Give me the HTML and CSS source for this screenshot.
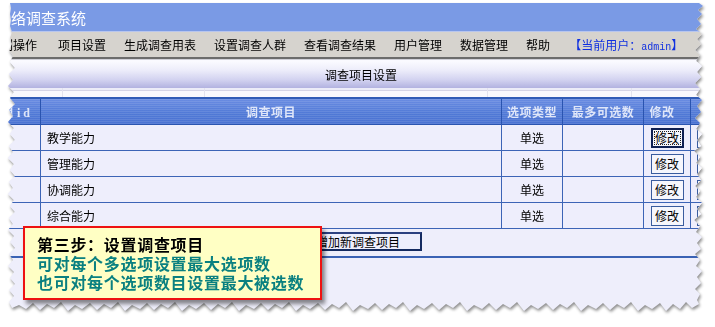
FILE: index.html
```html
<!DOCTYPE html>
<html lang="zh-CN">
<head>
<meta charset="utf-8">
<title>网络调查系统</title>
<link rel="stylesheet" href="styles.css">
</head>
<body>
<div class="stage">
  <div class="sheet-wrap">
    <div class="sheet">
      <div class="titlebar"><span class="title">网络调查系统</span></div>
      <nav class="menu">
        <span class="first">列操作</span>
        <span>项目设置</span>
        <span>生成调查用表</span>
        <span>设置调查人群</span>
        <span>查看调查结果</span>
        <span>用户管理</span>
        <span>数据管理</span>
        <span>帮助</span>
        <span class="user">【当前用户：<span class="mono">admin</span>】</span>
      </nav>
      <div class="menu-rule"></div>
      <div class="bar">调查项目设置</div>
      <div class="ghost-row"><span></span><span></span><span></span><span></span><span></span></div>
      <div class="grid">
        <div class="row head">
          <div class="c c-id">题目id</div>
          <div class="c">调查项目</div>
          <div class="c">选项类型</div>
          <div class="c">最多可选数</div>
          <div class="c c-edit">修改</div>
          <div class="c"></div>
        </div>
        <div class="row">
          <div class="c"></div>
          <div class="c c-name">教学能力</div>
          <div class="c">单选</div>
          <div class="c"></div>
          <div class="c"><button class="btn btn-focus">修改</button></div>
          <div class="c c-del"><button class="btn">删除</button></div>
        </div>
        <div class="row">
          <div class="c"></div>
          <div class="c c-name">管理能力</div>
          <div class="c">单选</div>
          <div class="c"></div>
          <div class="c"><button class="btn">修改</button></div>
          <div class="c c-del"><button class="btn">删除</button></div>
        </div>
        <div class="row">
          <div class="c"></div>
          <div class="c c-name">协调能力</div>
          <div class="c">单选</div>
          <div class="c"></div>
          <div class="c"><button class="btn">修改</button></div>
          <div class="c c-del"><button class="btn">删除</button></div>
        </div>
        <div class="row">
          <div class="c"></div>
          <div class="c c-name">综合能力</div>
          <div class="c">单选</div>
          <div class="c"></div>
          <div class="c"><button class="btn">修改</button></div>
          <div class="c c-del"><button class="btn">删除</button></div>
        </div>
      </div>
      <div class="addrow"><button class="btn btn-add">增加新调查项目</button></div>
      <div class="rest"></div>
    </div>
  </div>
  <div class="tip">
    <div class="tip-head">第三步：设置调查项目</div>
    <div class="tip-line">可对每个多选项设置最大选项数</div>
    <div class="tip-line">也可对每个选项数目设置最大被选数</div>
  </div>
</div>
</body>
</html>
```

FILE: styles.css
```css
* { box-sizing: border-box; }
html, body { margin: 0; padding: 0; background: #ffffff; }
body {
  font-family: "Noto Sans CJK SC", "Liberation Sans", sans-serif;
  font-size: 12px;
  color: #000;
}
.stage { position: relative; width: 715px; height: 327px; overflow: hidden; }
.sheet-wrap { filter: drop-shadow(1px 2px 1.5px rgba(0,0,0,0.45)); }
.sheet {
  width: 715px;
  height: 327px;
  overflow: hidden;
  background: #eeeefb;
  display: flex;
  flex-direction: column;
  clip-path: polygon(10px 3px, 699px 3px, 703px 6px, 698px 10px, 702px 14px, 697px 19px, 701px 24px, 696px 29px, 702px 34px, 697px 39px, 701px 44px, 695px 50px, 700px 55px, 696px 61px, 702px 66px, 697px 72px, 701px 77px, 695px 83px, 700px 89px, 696px 95px, 702px 100px, 697px 106px, 701px 112px, 695px 118px, 700px 123px, 696px 129px, 702px 134px, 697px 140px, 701px 146px, 694px 151px, 700px 157px, 696px 163px, 702px 168px, 697px 174px, 701px 180px, 695px 186px, 700px 191px, 696px 197px, 702px 203px, 697px 209px, 701px 214px, 694px 220px, 700px 226px, 696px 232px, 702px 237px, 697px 243px, 701px 249px, 695px 254px, 700px 260px, 696px 266px, 702px 271px, 697px 277px, 701px 283px, 695px 289px, 700px 294px, 697px 300px, 699px 304px,
    692px 308px, 686px 302px, 680px 309px, 673px 304px, 666px 311px, 660px 303px, 652px 309px, 645px 305px, 638px 311px, 631px 302px, 624px 308px, 617px 304px, 610px 310px, 603px 303px, 596px 309px, 588px 305px, 581px 311px, 574px 302px, 567px 308px, 560px 304px, 553px 310px, 546px 303px, 538px 309px, 531px 305px, 524px 311px, 517px 302px, 510px 308px, 503px 304px, 496px 310px, 489px 303px, 482px 309px, 474px 305px, 467px 311px, 460px 302px, 453px 308px, 446px 304px, 439px 310px, 432px 303px, 424px 309px, 417px 305px, 410px 311px, 403px 302px, 396px 308px, 389px 304px, 382px 310px, 375px 303px, 368px 309px, 360px 305px, 353px 311px, 346px 302px, 339px 308px, 332px 304px, 325px 310px, 318px 303px, 310px 309px, 303px 305px, 296px 311px, 289px 302px, 282px 308px, 275px 304px, 268px 310px, 261px 303px, 254px 309px, 246px 305px, 239px 311px, 232px 302px, 225px 308px, 218px 304px, 211px 310px, 204px 303px, 196px 309px, 189px 305px, 182px 311px, 175px 302px, 168px 308px, 161px 304px, 154px 310px, 147px 303px, 140px 309px, 132px 305px, 125px 311px, 118px 302px, 111px 308px, 104px 304px, 97px 310px, 90px 303px, 82px 309px, 75px 305px, 68px 311px, 61px 302px, 54px 308px, 47px 304px, 40px 310px, 33px 303px, 26px 309px, 19px 305px, 12px 308px,
    9px 302px, 14px 296px, 9px 290px, 15px 284px, 10px 278px, 14px 272px, 8px 266px, 13px 260px, 9px 254px, 15px 248px, 10px 242px, 14px 236px, 8px 230px, 13px 224px, 9px 218px, 15px 212px, 10px 206px, 14px 200px, 8px 194px, 13px 188px, 9px 182px, 15px 176px, 10px 170px, 14px 164px, 8px 158px, 13px 152px, 9px 146px, 15px 140px, 10px 134px, 14px 128px, 8px 122px, 13px 116px, 9px 110px, 15px 104px, 10px 98px, 14px 92px, 8px 86px, 13px 80px, 9px 74px, 15px 68px, 10px 62px, 13px 56px, 9px 50px, 12px 44px, 10px 38px, 12px 32px, 10px 26px, 11px 20px, 10px 14px, 11px 8px);
}

/* title bar */
.titlebar {
  margin-top: 3px;
  height: 29px;
  flex: none;
  background: #7a9ae5;
  border-bottom: 1px solid #b8c6ee;
  display: flex;
  align-items: center;
  color: #ffffff;
  font-size: 15px;
  white-space: nowrap;
}
.title { margin-left: -4px; }

/* menu */
.menu {
  flex: none;
  height: 25px;
  background: #d6d3ce;
  display: flex;
  align-items: center;
  gap: 18px;
  padding-left: 1px;
  white-space: nowrap;
  font-size: 12px;
}
.menu .first { margin-right: 3px; }
.menu .user { color: #1030e0; margin-left: 1px; }
.menu .mono { font-family: "Liberation Mono", "DejaVu Sans Mono", monospace; font-size: 10px; }
.menu-rule {
  flex: none;
  height: 4px;
  background: linear-gradient(#6c6c6c 0 2px, #d0d0d8 2px 3px, #fafaff 3px);
}

/* section bar */
.bar {
  flex: none;
  height: 27px;
  background: linear-gradient(#fbfbff 0%, #ececfa 35%, #d2d2f0 70%, #b2b2e0 100%);
  display: flex;
  align-items: center;
  justify-content: center;
  padding-left: 7px;
  font-size: 12px;
}
.ghost-row {
  flex: none;
  height: 9px;
  display: grid;
  grid-template-columns: 63px 142px 283px 144px 1fr;
  background: linear-gradient(#ececf8 0 2px, #d4d4e6 2px 3px, #f8f8fd 3px);
}
.ghost-row span { border-right: 1px solid #e2e2ee; }

/* table */
.grid {
  flex: none;
  border-top: 2px solid #2f5bb6;
  width: 780px;
}
.row {
  display: grid;
  grid-template-columns: 41px 461px 61px 81px 47px 89px;
  height: 26px;
  border-bottom: 1px solid #3c64b6;
  background: #eeeefc;
}
.c {
  border-right: 1px solid #3c64b6;
  display: flex;
  align-items: center;
  justify-content: center;
  white-space: nowrap;
  overflow: hidden;
}
.c-name { justify-content: flex-start; padding-left: 6px; }
.c-del { justify-content: flex-start; padding-left: 6px; }
.head {
  background:
    repeating-linear-gradient(rgba(255,255,255,0.10) 0 1px, rgba(255,255,255,0) 1px 2px),
    linear-gradient(#6a8ce2, #5079d6 60%, #4a72d2);
  border-bottom-color: #2a54b0;
}
.head .c {
  border-right-color: #2a54b0;
  color: #dfe6f9;
  font-weight: bold;
  font-size: 12px;
  letter-spacing: 0.5px;
}
.head .c-id {
  justify-content: flex-end;
  padding-right: 7px;
  letter-spacing: 3px;
  font-family: "Liberation Serif", "Noto Sans CJK SC", serif;
}
.head .c-edit { padding-right: 10px; }

/* buttons */
.btn {
  font-family: "Noto Sans CJK SC", "Liberation Sans", sans-serif;
  font-size: 12px;
  color: #000;
  width: 33px;
  height: 20px;
  padding: 0;
  margin: 0;
  border: 1px solid #3a5c9e;
  background: #f6f6fc;
  display: flex;
  align-items: center;
  justify-content: center;
}
.btn-focus {
  border: 2px solid #0e1f52;
  outline: 1px dotted #222;
  outline-offset: -4px;
}
.addrow {
  flex: none;
  height: 29px;
  border-bottom: 2px solid #3a62b4;
  display: flex;
  align-items: center;
  padding-left: 294px;
  padding-bottom: 2px;
}
.btn-add {
  width: 128px;
  height: 19px;
  border: 2px solid #142a60;
  border-top-color: #2c4080;
  background: #eeeefc;
  justify-content: flex-start;
  padding-left: 20px;
}
.rest { flex: 1; }

/* tooltip */
.tip {
  position: absolute;
  left: 23px;
  top: 226px;
  width: 299px;
  height: 74px;
  border: 2px solid #ee1111;
  background: #ffffc4;
  box-shadow: 3px 4px 4px rgba(0,0,0,0.45);
  padding: 7px 0 0 12px;
  font-family: "Noto Sans CJK SC", "Liberation Sans", sans-serif;
  font-size: 16px;
  font-weight: bold;
  line-height: 19px;
  letter-spacing: 0.7px;
  white-space: nowrap;
}
.tip-head { color: #000; }
.tip-line { color: #0a8080; }
```
